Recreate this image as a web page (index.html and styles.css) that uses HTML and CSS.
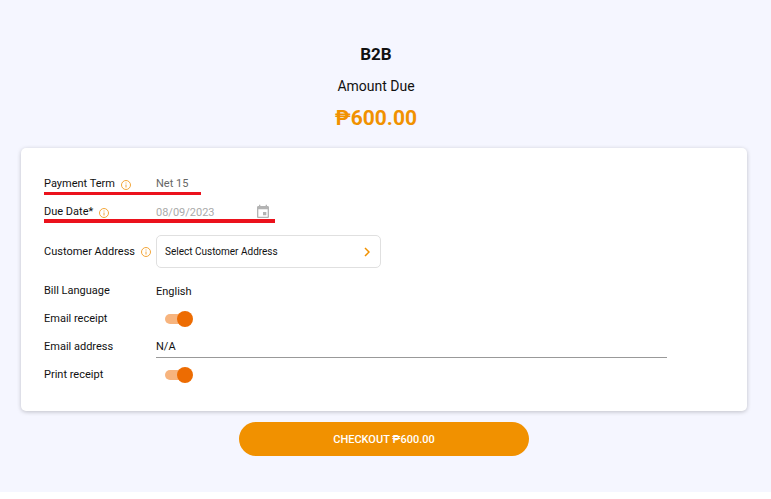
FILE: index.html
```html
<!DOCTYPE html>
<html lang="en">
<head>
  <meta charset="UTF-8" />
  <meta name="viewport" content="width=device-width, initial-scale=1.0"/>
  <title>B2B Checkout</title>
  <link rel="stylesheet" href="styles.css">
</head>
<body>

  <main class="checkout">
    <header class="summary">
      <h1>B2B</h1>
      <p class="summary-label">Amount Due</p>
      <p class="summary-amount">₱600.00</p>
    </header>

    <form class="payment-form">
      <section class="card">
        <div class="row marked marked-term">
          <div class="row-label">
            <span>Payment Term</span>
            <svg class="info" viewBox="0 0 10 10"><circle cx="5" cy="5" r="4.500"/><path d="M5 4.500v3M5 2.500v1"/></svg>
          </div>
          <span class="muted">Net 15</span>
        </div>

        <div class="row marked marked-date">
          <div class="row-label">
            <label for="due-date">Due Date*</label>
            <svg class="info" viewBox="0 0 10 10"><circle cx="5" cy="5" r="4.500"/><path d="M5 4.500v3M5 2.500v1"/></svg>
          </div>
          <div class="date-field">
            <input type="text" id="due-date" value="08/09/2023" disabled>
            <svg class="calendar" viewBox="0 0 24 24"><path d="M19 3h-1V1h-2v2H8V1H6v2H5c-1.100 0-2 .9-2 2v14c0 1.100.9 2 2 2h14c1.100 0 2-.9 2-2V5c0-1.100-.9-2-2-2zm0 16H5V8h14v11zM12 12h5v5h-5z"/></svg>
          </div>
        </div>

        <div class="row row-address">
          <div class="row-label">
            <label for="address">Customer Address</label>
            <svg class="info" viewBox="0 0 10 10"><circle cx="5" cy="5" r="4.500"/><path d="M5 4.500v3M5 2.500v1"/></svg>
          </div>
          <button type="button" id="address" class="address-button">
            <span>Select Customer Address</span>
            <svg class="chevron" viewBox="0 0 6 10"><path d="M1 1l4 4-4 4"/></svg>
          </button>
        </div>

        <div class="row">
          <div class="row-label">Bill Language</div>
          <span>English</span>
        </div>

        <div class="row">
          <label class="row-label" for="email-receipt">Email receipt</label>
          <input type="checkbox" id="email-receipt" class="switch" checked>
        </div>

        <div class="row">
          <label class="row-label" for="email">Email address</label>
          <input type="text" id="email" class="email-input" value="N/A">
        </div>

        <div class="row">
          <label class="row-label" for="print-receipt">Print receipt</label>
          <input type="checkbox" id="print-receipt" class="switch" checked>
        </div>
      </section>

      <button type="submit" class="checkout-button">CHECKOUT ₱600.00</button>
    </form>
  </main>

</body>
</html>
```
FILE: styles.css
```css
* {
  box-sizing: border-box;
}

body {
  margin: 0;
  font-family: Roboto, 'Liberation Sans', sans-serif;
  font-size: 11px;
  color: #111;
  background-color: #fff;
}

input,
button {
  font: inherit;
  color: inherit;
}

.checkout {
  padding: 40px 24px 36px 21px;
  background-color: #f5f6ff;
}

.summary {
  margin-right: 16px;
  text-align: center;
}

.summary h1 {
  margin: 0;
  font-size: 17px;
  line-height: 28px;
  font-weight: 700;
}

.summary-label {
  margin: 8px 0;
  font-size: 14px;
  line-height: 20px;
}

.summary-amount {
  margin: 0 0 16px;
  font-size: 21px;
  line-height: 28px;
  font-weight: 700;
  color: #f19100;
}

.payment-form {
  display: flex;
  flex-direction: column;
  align-items: center;
}

.card {
  width: 100%;
  padding: 22px 80px 22px 23px;
  background-color: #fff;
  border-radius: 5px;
  box-shadow: 0 1px 4px rgba(0, 0, 0, 0.22);
}

.row {
  display: grid;
  grid-template-columns: 112px 1fr;
  align-items: center;
  min-height: 28px;
}

.row-label {
  display: flex;
  align-items: center;
  gap: 6px;
  padding-bottom: 1px;
  white-space: nowrap;
}

/* red highlight under the term and the due date */
.marked {
  position: relative;
}

.marked::after {
  content: "";
  position: absolute;
  left: 0;
  background-color: #eb121c;
}

.marked-term::after {
  bottom: 3px;
  width: 157px;
  height: 3px;
}

.marked-date::after {
  bottom: 3px;
  width: 231px;
  height: 4px;
}

.info {
  flex: none;
  width: 10px;
  height: 10px;
  margin-top: 2px;
  fill: none;
  stroke: #f2a63a;
  stroke-width: 1;
}

.muted {
  padding-bottom: 1px;
  color: #666;
}

.date-field {
  display: flex;
  align-items: center;
  width: 116px;
}

.date-field input {
  flex: 1;
  min-width: 0;
  padding: 0;
  border: none;
  background: none;
  color: #aaa;
}

.calendar {
  width: 18px;
  height: 16px;
  fill: #b3b3b3;
}

.row-address {
  min-height: 51px;
}

.address-button {
  display: flex;
  align-items: center;
  justify-content: space-between;
  width: 225px;
  height: 33px;
  padding: 0 10px 0 8px;
  border: 1px solid #e0e0e0;
  border-radius: 5px;
  background-color: #fff;
  font-size: 10px;
  cursor: pointer;
}

.chevron {
  width: 6px;
  height: 10px;
  fill: none;
  stroke: #f19100;
  stroke-width: 1.5;
}

.switch {
  appearance: none;
  position: relative;
  width: 26px;
  height: 10px;
  margin: 0 0 0 9px;
  border-radius: 5px;
  background-color: #f7b47e;
  cursor: pointer;
}

.switch::after {
  content: "";
  position: absolute;
  top: -3px;
  left: 0;
  width: 16px;
  height: 16px;
  border-radius: 50%;
  background-color: #ed6c02;
}

.switch:checked::after {
  left: 12px;
}

.email-input {
  width: 100%;
  height: 22px;
  padding: 0;
  border: none;
  border-bottom: 1px solid #999;
  background: none;
}

.checkout-button {
  width: 40%;
  height: 34px;
  margin-top: 11px;
  border: none;
  border-radius: 17px;
  background-color: #f19100;
  color: #fff;
  font-weight: 500;
  cursor: pointer;
}
```
